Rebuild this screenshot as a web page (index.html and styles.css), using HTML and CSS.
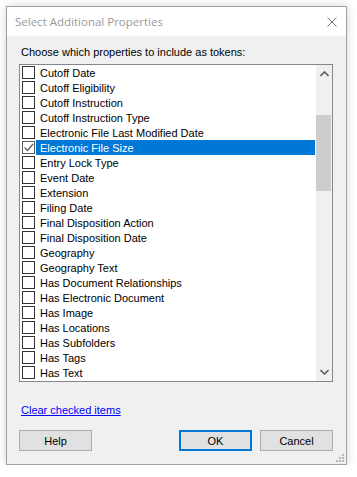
FILE: index.html
```html
<!DOCTYPE html>
<html lang="en">
<head>
  <meta charset="UTF-8" />
  <title>Select Additional Properties</title>
  <link rel="stylesheet" href="styles.css">
</head>
<body>
  <div class="dialog">
    <div class="titlebar">
      <span class="title">Select Additional Properties</span>
      <svg class="close" width="10" height="10" viewBox="0 0 10 10">
        <path d="M0.5 0.5 L9.5 9.5 M9.5 0.5 L0.5 9.5" stroke="#7a7a7a" stroke-width="1" fill="none" />
      </svg>
    </div>
    <div class="content">
      <div class="prompt">Choose which properties to include as tokens:</div>
      <div class="listbox">
        <ul class="items">
          <li><span class="box"></span><span class="label">Cutoff Date</span></li>
          <li><span class="box"></span><span class="label">Cutoff Eligibility</span></li>
          <li><span class="box"></span><span class="label">Cutoff Instruction</span></li>
          <li><span class="box"></span><span class="label">Cutoff Instruction Type</span></li>
          <li><span class="box"></span><span class="label">Electronic File Last Modified Date</span></li>
          <li class="selected"><span class="box checked">
            <svg width="11" height="11" viewBox="0 0 11 11"><path d="M1.5 5.5 L4.5 8.5 L10 2" stroke="#5a5a5a" stroke-width="1.2" fill="none" /></svg>
          </span><span class="label">Electronic File Size</span></li>
          <li><span class="box"></span><span class="label">Entry Lock Type</span></li>
          <li><span class="box"></span><span class="label">Event Date</span></li>
          <li><span class="box"></span><span class="label">Extension</span></li>
          <li><span class="box"></span><span class="label">Filing Date</span></li>
          <li><span class="box"></span><span class="label">Final Disposition Action</span></li>
          <li><span class="box"></span><span class="label">Final Disposition Date</span></li>
          <li><span class="box"></span><span class="label">Geography</span></li>
          <li><span class="box"></span><span class="label">Geography Text</span></li>
          <li><span class="box"></span><span class="label">Has Document Relationships</span></li>
          <li><span class="box"></span><span class="label">Has Electronic Document</span></li>
          <li><span class="box"></span><span class="label">Has Image</span></li>
          <li><span class="box"></span><span class="label">Has Locations</span></li>
          <li><span class="box"></span><span class="label">Has Subfolders</span></li>
          <li><span class="box"></span><span class="label">Has Tags</span></li>
          <li><span class="box"></span><span class="label">Has Text</span></li>
        </ul>
        <div class="scrollbar">
          <svg class="arrow" width="9" height="6" viewBox="0 0 9 6"><path d="M0.5 5 L4.5 1 L8.5 5" stroke="#606060" stroke-width="1.6" fill="none" /></svg>
          <div class="track">
            <div class="thumb"></div>
          </div>
          <svg class="arrow" width="9" height="6" viewBox="0 0 9 6"><path d="M0.5 1 L4.5 5 L8.5 1" stroke="#606060" stroke-width="1.6" fill="none" /></svg>
        </div>
      </div>
      <a class="clear" href="#">Clear checked items</a>
      <div class="buttons">
        <button class="btn">Help</button>
        <span class="spacer"></span>
        <button class="btn default">OK</button>
        <button class="btn">Cancel</button>
      </div>
      <svg class="grip" width="8" height="8" viewBox="0 0 8 8">
        <rect x="6" y="0" width="2" height="2" fill="#b8b8b8" />
        <rect x="3" y="3" width="2" height="2" fill="#b8b8b8" />
        <rect x="6" y="3" width="2" height="2" fill="#b8b8b8" />
        <rect x="0" y="6" width="2" height="2" fill="#b8b8b8" />
        <rect x="3" y="6" width="2" height="2" fill="#b8b8b8" />
        <rect x="6" y="6" width="2" height="2" fill="#b8b8b8" />
      </svg>
    </div>
  </div>
</body>
</html>
```

FILE: styles.css
```css
body {
  margin: 0;
  background: #fff;
  font-family: 'Liberation Sans', Arial, sans-serif;
  font-size: 11px;
  color: #000;
}
.dialog {
  margin: 6px 0 0 6px;
  width: 339px;
  height: 457px;
  border: 1px solid #a0a0a0;
  box-shadow: 0 0 8px rgba(0,0,0,0.18);
  display: flex;
  flex-direction: column;
  background: #f0f0f0;
}
.titlebar {
  height: 29px;
  background: #fff;
  display: flex;
  align-items: center;
  padding: 0 9px 0 8px;
}
.title {
  flex: 1;
  font-family: 'Open Sans', 'Noto Sans', sans-serif;
  font-size: 11.5px;
  color: #9a9a9a;
}
.content {
  flex: 1;
  position: relative;
  padding: 8px 13px 0 12px;
}
.prompt {
  height: 20px;
  line-height: 15px;
  padding: 1px 0 0 2px;
  box-sizing: border-box;
}
.listbox {
  height: 316px;
  border: 1px solid #828790;
  background: #fff;
  display: flex;
}
.items {
  flex: 1;
  list-style: none;
  margin: 0;
  padding: 0 0 0 2px;
  overflow: hidden;
}
.items li {
  height: 15px;
  display: flex;
  align-items: center;
  white-space: nowrap;
}
.box {
  width: 11px;
  height: 11px;
  border: 1px solid #333;
  background: #fff;
  margin-right: 1px;
  flex: none;
  display: flex;
  align-items: center;
  justify-content: center;
}
.box.checked {
  border-color: #5a5a5a;
}
.label {
  height: 15px;
  line-height: 15px;
  padding: 1px 0 0 4px;
  box-sizing: border-box;
}
.selected .label {
  flex: 1;
  background: #0078d7;
  color: #fff;
  margin-right: 1px;
}
.scrollbar {
  width: 16px;
  background: #f0f0f0;
  display: flex;
  flex-direction: column;
  align-items: center;
}
.arrow {
  margin: 6px 0;
  flex: none;
}
.track {
  flex: 1;
  width: 100%;
  padding-top: 32px;
}
.thumb {
  height: 76px;
  margin: 0 1px 0 0;
  background: #cdcdcd;
}
.clear {
  display: inline-block;
  margin: 21px 0 0 2px;
  color: #0000ff;
  text-decoration: underline;
  line-height: 14px;
}
.buttons {
  display: flex;
  gap: 8px;
  margin-top: 13px;
}
.spacer {
  flex: 1;
}
.btn {
  width: 73px;
  height: 21px;
  background: #e1e1e1;
  border: 1px solid #adadad;
  font-family: inherit;
  font-size: 11px;
  color: #000;
  padding: 0;
}
.btn.default {
  border: 2px solid #0078d7;
}
.grip {
  position: absolute;
  right: 2px;
  bottom: 2px;
}
```
